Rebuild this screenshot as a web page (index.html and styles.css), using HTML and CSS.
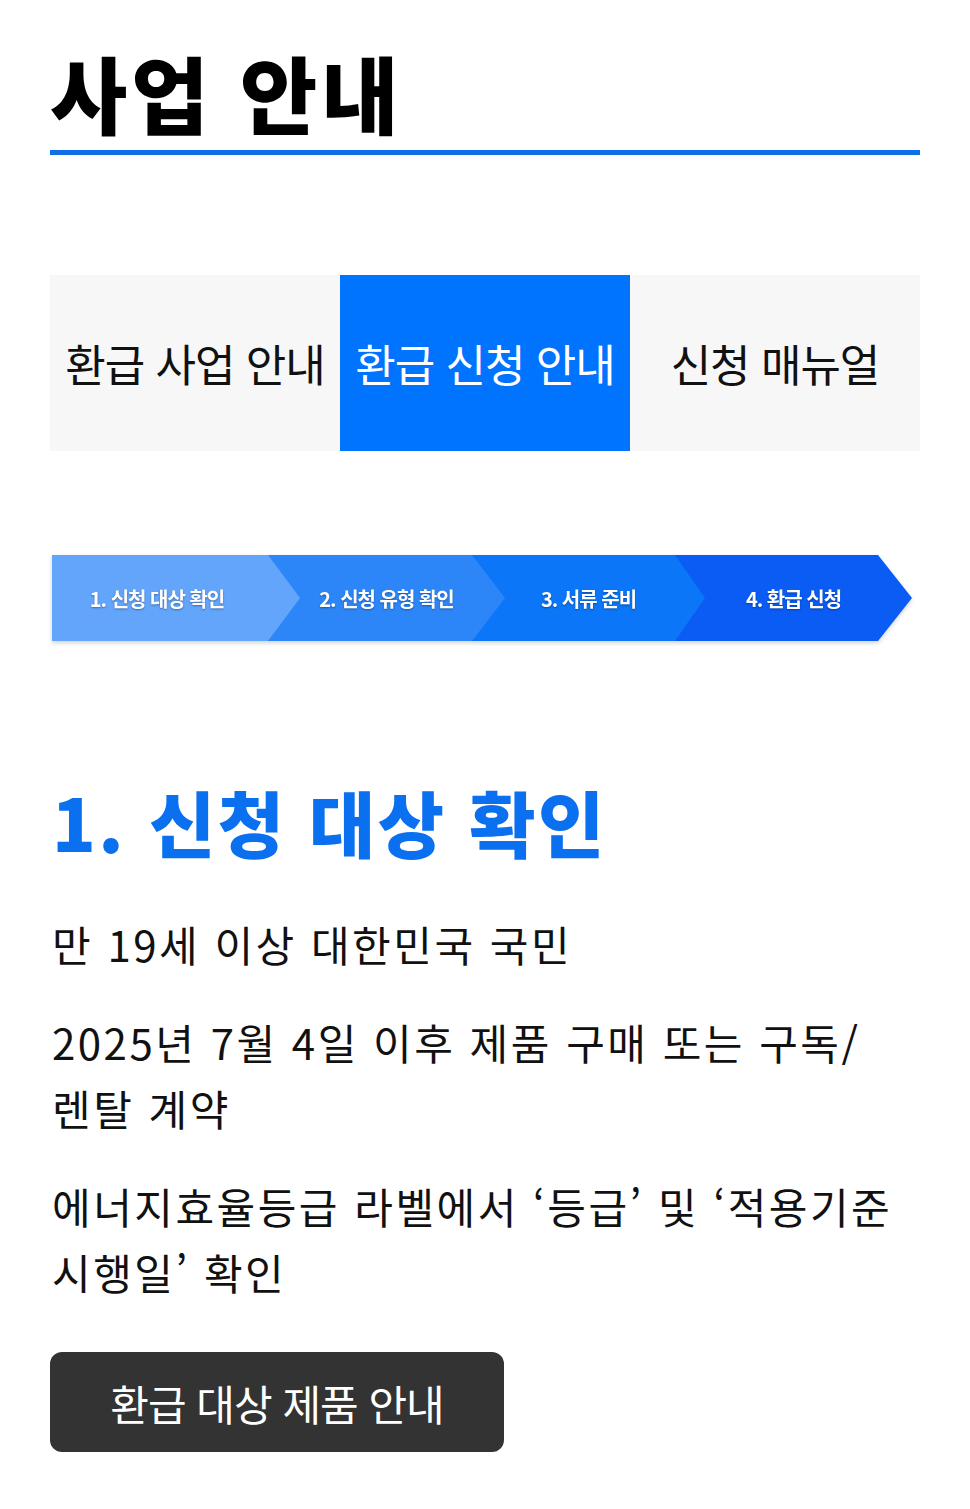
FILE: index.html
```html
<!DOCTYPE html>
<html lang="ko">

<head>
  <meta charset="UTF-8" />
  <title>사업 안내</title>
  <link rel="stylesheet" href="styles.css">
</head>

<body>

  <div class="obal">
    <h1 class="nadpis">사업 안내</h1>

    <ul class="karty">
      <li class="karta">환급 사업 안내</li>
      <li class="karta aktivna">환급 신청 안내</li>
      <li class="karta">신청 매뉴얼</li>
    </ul>

    <div class="kroky">
      <div class="krok krok1"><span>1. 신청 대상 확인</span></div>
      <div class="krok krok2"><span>2. 신청 유형 확인</span></div>
      <div class="krok krok3"><span>3. 서류 준비</span></div>
      <div class="krok krok4"><span>4. 환급 신청</span></div>
    </div>

    <h2 class="podnadpis">1. 신청 대상 확인</h2>
    <p class="text">만 19세 이상 대한민국 국민</p>
    <p class="text">2025년 7월 4일 이후 제품 구매 또는 구독/렌탈 계약</p>
    <p class="text">에너지효율등급 라벨에서 ‘등급’ 및 ‘적용기준 시행일’ 확인</p>

    <button class="tlacidlo">환급 대상 제품 안내</button>
  </div>

</body>

</html>
```

FILE: styles.css
```css
body {
  font-family: "Noto Sans CJK KR", "Noto Sans", sans-serif;
  background-color: #fff;
  color: #111;
  margin: 0;
}

.obal {
  width: 870px;
  padding: 40px 50px 0;
}

.nadpis {
  margin: 0;
  font-size: 84px;
  font-weight: 900;
  line-height: 104px;
  letter-spacing: 4px;
  color: #000;
  padding-bottom: 6px;
  border-bottom: 5px solid #0f6fe8;
}

/* záložky */
.karty {
  list-style: none;
  margin: 120px 0 0;
  padding: 0;
  display: flex;
  height: 176px;
  background: #f7f7f7;
}

.karta {
  flex: 1;
  display: flex;
  align-items: center;
  justify-content: center;
  font-size: 44px;
  letter-spacing: -1px;
  color: #111;
}

.aktivna {
  background: #0073ff;
  color: #fff;
}

/* kroky */
.kroky {
  display: flex;
  margin: 104px 0 0 2px;
  height: 86px;
  filter: drop-shadow(0 2px 2px rgba(0, 0, 0, 0.18));
}

.krok {
  display: flex;
  align-items: center;
  justify-content: center;
  color: #fff;
  font-size: 20px;
  font-weight: 700;
  letter-spacing: -1px;
  text-shadow: 0 1px 2px rgba(0, 0, 0, 0.35);
}

.krok1 {
  width: 248px;
  padding-right: 38px;
  box-sizing: border-box;
  background: #62a5fb;
  clip-path: polygon(0 0, 216px 0, 100% 50%, 216px 100%, 0 100%);
  z-index: 4;
}

.krok2 {
  width: 237px;
  margin-left: -32px;
  background: #2d86f8;
  clip-path: polygon(0 0, 204px 0, 100% 50%, 204px 100%, 0 100%);
  z-index: 3;
}

.krok3 {
  width: 233px;
  margin-left: -33px;
  background: #0b76f8;
  clip-path: polygon(0 0, 203px 0, 100% 50%, 203px 100%, 0 100%);
  z-index: 2;
}

.krok4 {
  width: 237px;
  margin-left: -30px;
  background: #0a5cf4;
  clip-path: polygon(0 0, 203px 0, 100% 50%, 203px 100%, 0 100%);
  z-index: 1;
}

.podnadpis {
  margin: 135px 0 0 2px;
  font-size: 72px;
  font-weight: 800;
  line-height: 90px;
  letter-spacing: 2.5px;
  color: #0a70f0;
}

.text {
  margin: 45px 0 0 2px;
  font-size: 42px;
  line-height: 66px;
  letter-spacing: 2.5px;
  word-break: keep-all;
  color: #111;
}

.text + .text {
  margin-top: 32px;
}

.tlacidlo {
  margin-top: 47px;
  width: 454px;
  height: 100px;
  background: #333;
  color: #fff;
  border: none;
  border-radius: 12px;
  font-family: inherit;
  font-size: 42px;
  letter-spacing: -1px;
}
```
